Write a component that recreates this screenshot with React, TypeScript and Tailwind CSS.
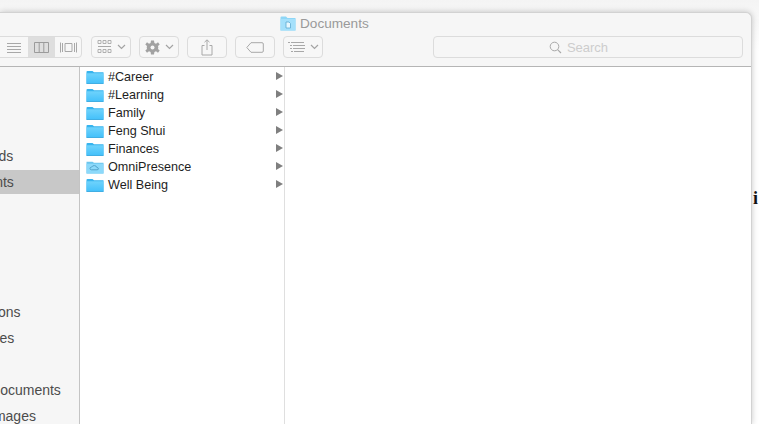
const font = { fontFamily: '"Liberation Sans", Arial, sans-serif' };

function Folder() {
  return (
    <svg width="18" height="14" viewBox="0 0 18 15" preserveAspectRatio="none" className="shrink-0 -mt-[1px]">
      <defs>
        <linearGradient id="fg" x1="0" y1="0" x2="0" y2="1">
          <stop offset="0" stopColor="#6fd3fc" />
          <stop offset="1" stopColor="#43c0fa" />
        </linearGradient>
      </defs>
      <path d="M0.5 2 Q0.5 1 1.5 1 H6.5 L8 2.5 H17.5 V14.5 H0.5 Z" fill="#37b4ee" />
      <path d="M0.5 3.5 H17.5 V14.5 H0.5 Z" fill="url(#fg)" />
      <path d="M0.5 14 H17.5 V15 H0.5 Z" fill="#2b9fd8" opacity="0.7" />
    </svg>
  );
}

function CloudFolder() {
  return (
    <svg width="18" height="14" viewBox="0 0 18 15" preserveAspectRatio="none" className="shrink-0 -mt-[1px]">
      <path d="M0.5 2 H6.5 L8 3 H17.5 V14.5 H0.5 Z" fill="#6cc6ee" />
      <path d="M0.5 4 H17.5 V14.5 H0.5 Z" fill="#8cd9fa" />
      <path d="M5.5 10.5 Q4 10.5 4 9 Q4 7.8 5.5 7.7 Q6.5 5.8 8.5 6 Q10.5 6.2 10.8 8 Q12.5 8.2 12.5 9.4 Q12.5 10.5 11 10.5 Z" fill="none" stroke="#4a9cc4" strokeWidth="0.9" />
    </svg>
  );
}

function Chevron() {
  return (
    <svg width="9" height="6" viewBox="0 0 9 6">
      <path d="M1 1 L4.5 4.5 L8 1" fill="none" stroke="#a3a3a3" strokeWidth="1.2" />
    </svg>
  );
}

function ToolButton({ children }: { children: React.ReactNode }) {
  return (
    <div className="w-[40px] h-[22px] rounded-[4px] border border-[#dcdcdc] bg-[#f7f7f7] flex items-center justify-center gap-[5px] shrink-0">
      {children}
    </div>
  );
}

const items = ["#Career", "#Learning", "Family", "Feng Shui", "Finances", "OmniPresence", "Well Being"];
const sidebar = [
  { t: "Downloads", ml: "-ml-[56px]" },
  { t: "Documents", ml: "-ml-[57px]", sel: true },
  { t: "", ml: "" },
  { t: "", ml: "" },
  { t: "", ml: "" },
  { t: "", ml: "" },
  { t: "Applications", ml: "-ml-[55px]" },
  { t: "Favourites", ml: "-ml-[51px]" },
  { t: "", ml: "" },
  { t: "Google Documents", ml: "-ml-[59px]" },
  { t: "Google Images", ml: "-ml-[59px]" },
];

export default function App() {
  return (
    <div className="relative w-[759px] h-[424px] overflow-hidden bg-gradient-to-b from-[#f4f4f4] to-white to-[12%] pt-[12px] pr-[7px]" style={font}>
      <div className="h-[412px] bg-[#f6f6f6] rounded-tr-[6px] border-t border-r border-[#d2d2d2] flex flex-col shadow-[0_0_6px_rgba(0,0,0,0.22)]">
        <div className="h-[54px] shrink-0 border-b border-[#b5b5b5] flex flex-col">
          <div className="h-[21px] pl-[280px] flex items-center gap-[4px] shrink-0">
            <svg width="16" height="15" viewBox="0 0 16 15" className="shrink-0">
              <path d="M0.5 1.5 Q0.5 0.5 1.5 0.5 H6 L7.5 2 H15.5 V14.5 H0.5 Z" fill="#8ed6f6" />
              <path d="M0.5 3 H15.5 V14.5 H0.5 Z" fill="#a4e0fb" />
              <path d="M6 6 H9 L10.5 7.5 V12 H6 Z" fill="#e6f7fe" stroke="#5aa9d2" strokeWidth="0.8" />
            </svg>
            <span className="text-[13.6px] text-[#9a9a9a] leading-none">Documents</span>
          </div>
          <div className="h-[22px] mt-[2px] flex items-center shrink-0">
            <div className="w-[83px] h-[22px] -ml-[1px] flex rounded-r-[4px] border border-[#dcdcdc] bg-[#f7f7f7] overflow-hidden shrink-0">
              <div className="w-[28px] flex items-center justify-center">
                <svg width="16" height="11" viewBox="0 0 16 11">
                  <path d="M1 1.5 H15 M1 4.5 H15 M1 7.5 H15 M1 10.5 H15" stroke="#a8a8a8" strokeWidth="1" />
                </svg>
              </div>
              <div className="w-[27px] bg-[#dedede] flex items-center justify-center">
                <svg width="17" height="11" viewBox="0 0 17 11">
                  <path d="M1.5 0.5 H15.5 V10.5 H1.5 Z M6.2 0.5 V10.5 M10.8 0.5 V10.5" fill="none" stroke="#9b9b9b" strokeWidth="1" />
                </svg>
              </div>
              <div className="flex-1 flex items-center justify-center">
                <svg width="19" height="11" viewBox="0 0 19 11">
                  <path d="M6 1.5 H13 V9.5 H6 Z M1.5 0.5 V10.5 M3.5 1 V10 M15.5 1 V10 M17.5 0.5 V10.5" fill="none" stroke="#a8a8a8" strokeWidth="1" />
                </svg>
              </div>
            </div>
            <div className="flex gap-[8px] ml-[9px]">
              <ToolButton>
                <svg width="15" height="14" viewBox="0 0 15 14">
                  <path d="M1 .5H4V3.5H1Z M6 .5H9V3.5H6Z M11 .5H14V3.5H11Z M1 9.5H4V12.5H1Z M6 9.5H9V12.5H6Z M11 9.5H14V12.5H11Z" fill="none" stroke="#a8a8a8" strokeWidth="0.9" />
                  <path d="M1 6.5H14" stroke="#a8a8a8" strokeWidth="1" />
                </svg>
                <Chevron />
              </ToolButton>
              <ToolButton>
                <svg width="15" height="15" viewBox="0 0 15 15">
                  <path fill="#a2a2a2" d="M6 0.5H9L9.4 3 11 3.7 13 2.3 14.7 4.4 13 6 13.3 7.5 13 9 14.7 10.6 13 12.7 11 11.3 9.4 12 9 14.5H6L5.6 12 4 11.3 2 12.7 0.3 10.6 2 9 1.7 7.5 2 6 0.3 4.4 2 2.3 4 3.7 5.6 3Z" />
                  <circle cx="7.5" cy="7.5" r="2" fill="#f7f7f7" />
                </svg>
                <Chevron />
              </ToolButton>
              <ToolButton>
                <svg width="12" height="17" viewBox="0 0 12 17">
                  <path d="M3.5 6.5 H1 V16 H11 V6.5 H8.5 M6 11 V1 M3.5 3.2 L6 .8 L8.5 3.2" fill="none" stroke="#a8a8a8" strokeWidth="1" />
                </svg>
              </ToolButton>
              <ToolButton>
                <svg width="18" height="11" viewBox="0 0 18 11">
                  <path d="M5 0.7 H16 Q17.3 .7 17.3 2 V9 Q17.3 10.3 16 10.3 H5 L0.8 5.5 Z" fill="none" stroke="#a8a8a8" strokeWidth="1" />
                </svg>
              </ToolButton>
              <ToolButton>
                <svg width="17" height="12" viewBox="0 0 17 12">
                  <path d="M0 1.5H2 M3 1.5H16 M2 4.5H4 M5 4.5H17 M2 7.5H4 M5 7.5H17 M3 10.5H5 M6 10.5H16" stroke="#a8a8a8" strokeWidth="1" />
                </svg>
                <Chevron />
              </ToolButton>
            </div>
            <div className="w-[310px] h-[22px] ml-[110px] rounded-[4px] border border-[#dcdcdc] bg-[#f6f6f6] flex items-center justify-center gap-[5px] pr-[19px] shrink-0">
              <svg width="13" height="13" viewBox="0 0 13 13">
                <circle cx="5.5" cy="5.5" r="4.3" fill="none" stroke="#a8a8a8" strokeWidth="1" />
                <path d="M8.6 8.6 L12 12" stroke="#a8a8a8" strokeWidth="1.1" />
              </svg>
              <span className="text-[13px] text-[#cdcdcd] leading-none">Search</span>
            </div>
          </div>
        </div>
        <div className="flex-1 flex min-h-0">
          <div className="w-[80px] shrink-0 border-r border-[#c4c4c4] bg-[#f6f6f6] overflow-hidden pt-[76px]">
            {sidebar.map((s, i) => (
              <div key={i} className="h-[26px] py-[1px]">
                <div className={`h-[24px] flex items-center whitespace-nowrap text-[14px] leading-none text-[#4c4c4c] ${s.sel ? "bg-[#c8c8c8]" : ""}`}>
                  <span className={s.ml}>{s.t}</span>
                </div>
              </div>
            ))}
          </div>
          <div className="w-[205px] shrink-0 bg-white border-r border-[#dfdfdf] pt-[1px]">
            {items.map((t) => (
              <div key={t} className="h-[18px] flex items-center pl-[6px] pr-[1px]">
                {t === "OmniPresence" ? <CloudFolder /> : <Folder />}
                <span className="ml-[4px] text-[12.6px] text-[#1e1e1e] leading-none flex-1">{t}</span>
                <svg width="7" height="8" viewBox="0 0 7 8" className="shrink-0 -mt-[2px]">
                  <path d="M0 0 L7 4 L0 8 Z" fill="#7f7f7f" />
                </svg>
              </div>
            ))}
          </div>
          <div className="flex-1 bg-white" />
        </div>
      </div>
      <span className="absolute left-[753px] top-[189px] text-[18px] leading-none font-bold text-[#111]" style={{ fontFamily: '"Liberation Serif", serif' }}>i</span>
    </div>
  );
}
